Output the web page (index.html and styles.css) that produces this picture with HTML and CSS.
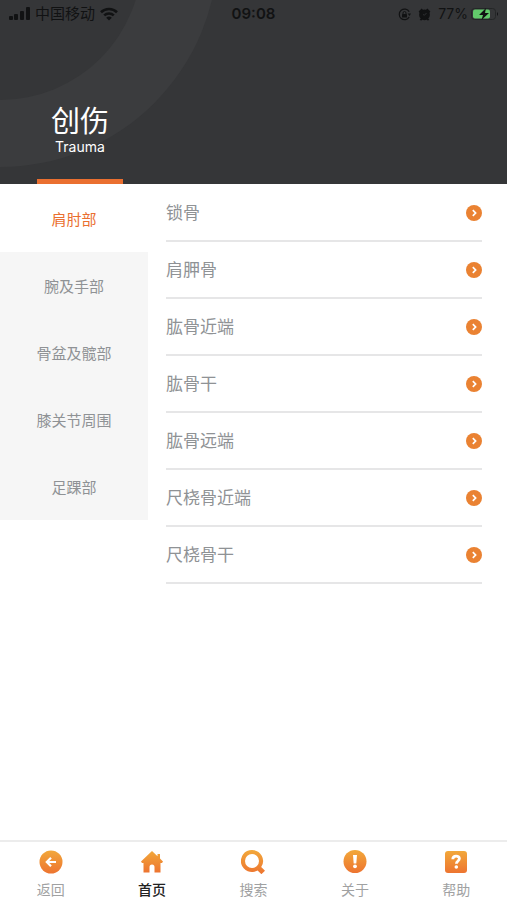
FILE: index.html
```html
<!DOCTYPE html>
<html lang="zh-CN">
<head>
<meta charset="utf-8">
<meta name="viewport" content="width=device-width, initial-scale=1">
<title>创伤 Trauma</title>
<link rel="stylesheet" href="styles.css">
</head>
<body>
<svg class="defs" aria-hidden="true">
  <defs>
    <linearGradient id="amber" x1="0" y1="0" x2="0" y2="1">
      <stop offset="0" stop-color="#f2a83a"/>
      <stop offset="1" stop-color="#ed7430"/>
    </linearGradient>
    <symbol id="chevron" viewBox="0 0 16 16">
      <circle cx="8" cy="8" r="8" fill="#ea8232"/>
      <path d="M6.800 5.200 9.600 8 6.800 10.800" fill="none" stroke="#fff" stroke-width="1.700"/>
    </symbol>
  </defs>
</svg>
<div class="app">
  <header class="hero">
    <svg class="rings" width="224" height="184" viewBox="0 0 224 184" aria-hidden="true">
      <circle cx="0" cy="-51" r="218" fill="#3b3c3e"/>
      <circle cx="0" cy="-42" r="142" fill="#353638"/>
    </svg>
    <div class="status">
      <div class="status-left">
        <svg width="22" height="14" viewBox="0 0 22 14" aria-hidden="true">
          <rect x="1" y="9" width="4" height="4" rx="1"/><rect x="6" y="7" width="4" height="6" rx="1"/><rect x="12" y="4" width="4" height="9" rx="1"/><rect x="18" y="0" width="4" height="13" rx="1"/>
        </svg>
        <span>中国移动</span>
        <svg width="18" height="14" viewBox="0 0 18 14" aria-hidden="true">
          <g fill="none" stroke="#111213" stroke-width="2.600"><path d="M1 5.200a11.500 11.500 0 0 1 16 0"/><path d="M4.200 8.400a7 7 0 0 1 9.600 0"/></g>
          <path d="M6.200 10.800a4 4 0 0 1 5.600 0L9 13.600z"/>
        </svg>
      </div>
      <time class="clock">09:08</time>
      <div class="status-right">
        <svg width="13" height="13" viewBox="0 0 13 13" aria-hidden="true">
          <path d="M11.200 3.800A5.300 5.300 0 1 0 11.200 9" fill="none" stroke="#111213" stroke-width="1.200"/>
          <path d="M9.600 5.500h3.400l-1.500 2.500z"/><rect x="4" y="6" width="5" height="3.600" rx=".6"/><path d="M5 6V5a1.500 1.500 0 0 1 3 0v1" fill="none" stroke="#111213"/>
        </svg>
        <svg width="13" height="13" viewBox="0 0 13 13" aria-hidden="true">
          <circle cx="6.500" cy="6.800" r="5.400"/><path d="M.6 3.600 3.600.6l1.800 1.600L2 5.200zM12.400 3.600 9.400.6 7.600 2.200 11 5.200zM1.600 12l2-2.400 1.400 1-1.500 2zM11.400 12l-2-2.400-1.400 1 1.500 2z"/><path d="M8.500 5 6.500 7.200 5 6.500" fill="none" stroke="#353638" stroke-width=".8"/>
        </svg>
        <span class="percent">77%</span>
        <svg class="battery" width="28" height="12" viewBox="0 0 28 12" aria-hidden="true">
          <rect x=".5" y=".5" width="24" height="11" rx="3" fill="none" stroke="#242627"/>
          <rect x="2" y="1.500" width="17" height="9" rx="2" fill="#62cc6b"/>
          <path d="M26 4q2 2 0 4z"/><path d="M15 0 8 7h4l-1.500 5L18 5h-4z"/>
        </svg>
      </div>
    </div>
    <div class="title">
      <h1>创伤</h1>
      <p>Trauma</p>
    </div>
  </header>
  <main class="content">
    <nav class="regions" aria-label="部位">
      <a class="region active" href="#shoulder" aria-current="true">肩肘部</a>
      <a class="region" href="#wrist">腕及手部</a>
      <a class="region" href="#pelvis">骨盆及髋部</a>
      <a class="region" href="#knee">膝关节周围</a>
      <a class="region" href="#foot">足踝部</a>
    </nav>
    <div class="bones">
      <a class="bone" href="#b1">锁骨<svg class="go" aria-hidden="true"><use href="#chevron"/></svg></a>
      <a class="bone" href="#b2">肩胛骨<svg class="go" aria-hidden="true"><use href="#chevron"/></svg></a>
      <a class="bone" href="#b3">肱骨近端<svg class="go" aria-hidden="true"><use href="#chevron"/></svg></a>
      <a class="bone" href="#b4">肱骨干<svg class="go" aria-hidden="true"><use href="#chevron"/></svg></a>
      <a class="bone" href="#b5">肱骨远端<svg class="go" aria-hidden="true"><use href="#chevron"/></svg></a>
      <a class="bone" href="#b6">尺桡骨近端<svg class="go" aria-hidden="true"><use href="#chevron"/></svg></a>
      <a class="bone" href="#b7">尺桡骨干<svg class="go" aria-hidden="true"><use href="#chevron"/></svg></a>
    </div>
  </main>
  <nav class="tabs" aria-label="主导航">
    <a class="tab" href="#back">
      <svg class="icon" viewBox="0 0 24 24" aria-hidden="true"><circle cx="12" cy="12" r="11.500" fill="url(#amber)"/><path d="M17 12H8.500M12 7.800 7.800 12l4.200 4.200" fill="none" stroke="#fff" stroke-width="2.200"/></svg>
      返回</a>
    <a class="tab current" href="#home" aria-current="page">
      <svg class="icon" viewBox="0 0 24 24" aria-hidden="true"><path d="M12 1 1 11.500 2 13h1.500v9.500h6V17a2.500 2.500 0 0 1 5 0v5.500h6V13H22l1-1.500-3-3V4h-2.500v2.200z" fill="url(#amber)"/></svg>
      首页</a>
    <a class="tab" href="#search">
      <svg class="icon" viewBox="0 0 24 24" aria-hidden="true"><path fill="url(#amber)" fill-rule="evenodd" d="M11 0a11 11 0 1 0 5.600 20.400l3.800 3.800 3.600-3.400-3.800-3.700A11 11 0 0 0 11 0zm0 4a7 7 0 1 1 0 14 7 7 0 0 1 0-14z"/></svg>
      搜索</a>
    <a class="tab" href="#about">
      <svg class="icon" viewBox="0 0 24 24" aria-hidden="true"><circle cx="12" cy="11.500" r="11.500" fill="url(#amber)"/><path d="M10 5h4l-.7 8.500h-2.600z" fill="#fff"/><circle cx="12" cy="16.300" r="1.900" fill="#fff"/></svg>
      关于</a>
    <a class="tab" href="#help">
      <svg class="icon" viewBox="0 0 24 24" aria-hidden="true"><rect x="1" y="1" width="22" height="22" rx="3" fill="url(#amber)"/><path d="M8.800 9.200c0-4 6.600-3.900 6.600-.6 0 2.400-3 2.400-3 5.200" fill="none" stroke="#fff" stroke-width="2.800"/><circle cx="12.300" cy="17" r="1.800" fill="#fff"/></svg>
      帮助</a>
  </nav>
</div>
</body>
</html>
```
FILE: styles.css
```css
* {
  box-sizing: border-box;
}

body {
  margin: 0;
  background: #fff;
  color: #8f9295;
  font-family: Inter, "Noto Sans CJK SC", sans-serif;
}

a {
  color: inherit;
  text-decoration: none;
}

svg {
  display: block;
  flex: none;
}

.defs {
  position: absolute;
  width: 0;
  height: 0;
}

.app {
  display: flex;
  flex-direction: column;
  min-height: 100vh;
}

.hero {
  position: relative;
  display: flex;
  flex-direction: column;
  justify-content: space-between;
  align-items: flex-start;
  height: 184px;
  background: #353638;
}

.rings {
  position: absolute;
  top: 0;
  left: 0;
}

.status {
  position: relative;
  display: grid;
  grid-template-columns: 1fr auto 1fr;
  align-items: center;
  width: 100%;
  height: 28px;
  padding: 0 8px;
  color: #111213;
  fill: #111213;
  font-size: 15px;
  line-height: 20px;
}

.status-left,
.status-right {
  display: flex;
  align-items: center;
  gap: 5px;
}

.status-right {
  justify-content: flex-end;
  gap: 7px;
}

.percent {
  font-size: 14px;
}

.battery {
  margin-left: -4px;
}

.clock {
  font-size: 15px;
  font-weight: 600;
}

.title {
  position: relative;
  width: 86px;
  margin-left: 37px;
  padding-bottom: 24px;
  border-bottom: 5px solid #ea6f30;
  color: #fff;
  text-align: center;
}

.title h1 {
  margin: 0;
  font-size: 29px;
  font-weight: 400;
  line-height: 34px;
}

.title p {
  margin: 0;
  font-size: 14px;
  line-height: 16px;
}

.content {
  display: flex;
  flex: 1;
  align-items: flex-start;
  gap: 18px;
  padding-top: 1px;
}

.regions {
  display: flex;
  flex: 0 0 148px;
  flex-direction: column;
  background: #f6f6f6;
}

.region {
  padding: 25px 0 22px;
  font-size: 15px;
  line-height: 20px;
  text-align: center;
}

.region.active {
  background: #fff;
  color: #ea6f30;
}

.bones {
  flex: 1;
  margin-right: 25px;
}

.bone {
  display: flex;
  align-items: center;
  justify-content: space-between;
  height: 57px;
  border-bottom: 2px solid #e6e6e7;
  font-size: 17px;
  line-height: 24px;
}

.go {
  width: 16px;
  height: 16px;
}

.tabs {
  display: grid;
  grid-template-columns: repeat(5, 1fr);
  border-top: 2px solid #ececec;
}

.tab {
  display: flex;
  flex-direction: column;
  align-items: center;
  gap: 6px;
  padding-top: 8px;
  color: #a0a1a2;
  font-size: 14px;
  line-height: 20px;
}

.tab.current {
  color: #222;
  font-weight: 500;
}

.icon {
  width: 24px;
  height: 24px;
}
```
